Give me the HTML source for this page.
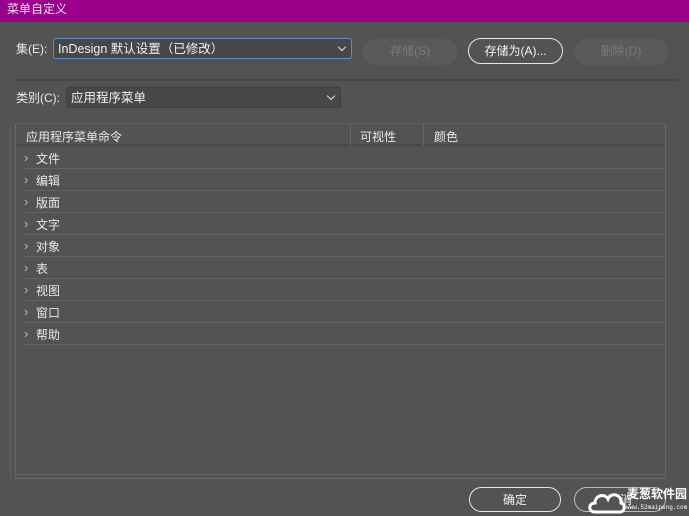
<!DOCTYPE html>
<html><head><meta charset="utf-8"><style>
*{margin:0;padding:0;box-sizing:border-box}
html,body{width:689px;height:516px;overflow:hidden}
body{background:#535353;position:relative;font-family:"Liberation Sans","Noto Sans CJK SC",sans-serif;color:#e8e8e8;font-size:12px}
.abs{position:absolute;white-space:nowrap}
.title{left:0;top:0;width:689px;height:22px;background:#9b008b;color:#f0e0ee;font-size:12px;line-height:18px;padding-left:7px}
.sel{border:1px solid #404040;background:#474747;border-radius:3px;line-height:20px;padding-left:4px;font-size:12.5px;color:#f0f0f0}
.sel.focus{border-color:#5b8fc9}
.chev{position:absolute;right:6px;top:5px;width:6px;height:6px;border-right:1px solid #ddd;border-bottom:1px solid #ddd;transform:rotate(45deg)}
.btn{border-radius:13px;text-align:center;line-height:24px;height:26px;font-size:12px}
.dis{background:#5a5a5a;color:#7a7a7a}
.en{border:1.5px solid #e6e6e6;color:#f2f2f2}
.row{left:24px;width:641px;height:22px;border-bottom:1px solid #646464;line-height:25px;padding-left:12px;font-size:12px}
.row:before{content:"›";position:absolute;left:0;top:-2px;color:#bbb;font-size:13px}
</style></head><body>
<div class="abs title">菜单自定义</div>
<div class="abs" style="left:16px;top:42px;line-height:14px">集(E):</div>
<div class="abs sel focus" style="left:53px;top:38px;width:299px;height:21px">InDesign 默认设置（已修改）<span class="chev"></span></div>
<div class="abs btn dis" style="left:363px;top:39px;width:94px">存储(S)</div>
<div class="abs btn en" style="left:468px;top:38px;width:95px">存储为(A)...</div>
<div class="abs btn dis" style="left:574px;top:39px;width:94px">删除(D)</div>
<div class="abs" style="left:15px;top:79px;width:664px;height:2px;background:#474747"></div>
<div class="abs" style="left:16px;top:91px;line-height:14px">类别(C):</div>
<div class="abs sel" style="left:66px;top:87px;width:275px;height:21px">应用程序菜单<span class="chev"></span></div>
<div class="abs" style="left:15px;top:123px;width:651px;height:356px;border:1px solid #676767;border-top-color:#5e5e5e"></div>
<div class="abs" style="left:10px;top:123px;width:1px;height:356px;background:#5e5e5e"></div>
<div class="abs" style="left:16px;top:124px;width:649px;height:22px;border-bottom:2px solid #4a4a4a"></div>
<div class="abs" style="left:26px;top:128px">应用程序菜单命令</div>
<div class="abs" style="left:350px;top:124px;width:1px;height:22px;background:#666"></div>
<div class="abs" style="left:423px;top:124px;width:1px;height:22px;background:#666"></div>
<div class="abs" style="left:360px;top:128px">可视性</div>
<div class="abs" style="left:434px;top:128px">颜色</div>
<div class="abs row" style="top:147px">文件</div>
<div class="abs row" style="top:169px">编辑</div>
<div class="abs row" style="top:191px">版面</div>
<div class="abs row" style="top:213px">文字</div>
<div class="abs row" style="top:235px">对象</div>
<div class="abs row" style="top:257px">表</div>
<div class="abs row" style="top:279px">视图</div>
<div class="abs row" style="top:301px">窗口</div>
<div class="abs row" style="top:323px">帮助</div>
<div class="abs" style="left:16px;top:474px;width:649px;height:1px;background:#666"></div>
<div class="abs btn en" style="left:469px;top:487px;width:92px;height:25px">确定</div>
<div class="abs btn en" style="left:574px;top:487px;width:92px;height:25px;border-color:#bbb">取消</div>
<svg class="abs" style="left:587px;top:486px" width="40" height="30"><path d="M8 26 C1 26 1 17 8 17 C8 9 18 7 21 13 C24 6 35 8 34 17 C39 18 38 26 33 26 Z" fill="#535353" stroke="#fff" stroke-width="3"/></svg>
<div class="abs" style="left:627px;top:487px;font-size:12px;color:#fff;font-weight:bold;line-height:14px">麦葱软件园</div>
<div class="abs" style="left:626px;top:504px;font-size:6px;color:#fff;font-family:'Liberation Mono',monospace;line-height:8px">www.52maipeng.com</div>
</body></html>
